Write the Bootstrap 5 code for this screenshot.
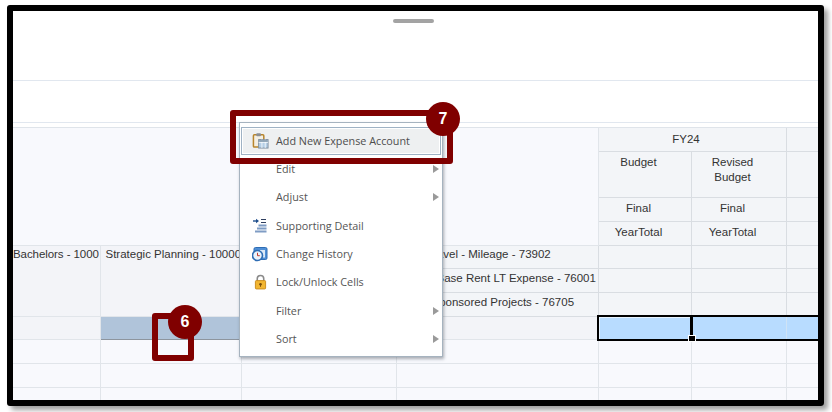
<!DOCTYPE html>
<html lang="en">
<head>
<meta charset="utf-8">
<title>Planning grid</title>
<link href="https://cdn.jsdelivr.net/npm/bootstrap@5.3.0/dist/css/bootstrap.min.css" rel="stylesheet">
<style>
html,body{margin:0;height:412px;overflow:hidden;background:#fff}
body{font-family:"Liberation Sans",Arial,sans-serif;font-size:12px;color:#333}
.shot-frame{margin:5px 0 0 7px;width:817px;height:401px;border:6px solid #000;border-radius:3px;box-shadow:4px 4px 5px rgba(0,0,0,.38)}
.shot-inner{position:relative;width:805px;height:389px;overflow:hidden;background:#fff}
.band-top{height:70px;border-bottom:1px solid #e1e7ef;padding:8px 0 0 380px}
.grab{width:41px;height:4px;border-radius:2px;background:#a3a3a3}
.band-mid{height:42px;border-bottom:1px solid #e1e7ef}
.band-thin{height:5px;border-bottom:1px solid #dfe4ea}
.pgrid{table-layout:fixed;width:806px;border-collapse:collapse;margin:0;background:#f8f9fd;color:#333;font-size:11.5px}
.pgrid td{padding:0 4px;border:1px solid #e1e5ea;height:23.7px;line-height:15px;vertical-align:middle;white-space:nowrap;overflow:hidden;background:#f8f9fd;box-shadow:none;color:#333}
.pgrid tr:first-child td{border-top:0}
.pgrid tr>td:first-child{border-left:0}
.pgrid tr>td:last-child{border-right:0}
.c1{width:87px}.c2{width:141px}.c3{width:155px}.c4{width:202px}.c5{width:93px}.c6{width:95px}.c7{width:33px}
.pgrid td.hd{background:#f3f5f8;text-align:center;border-color:#d9dde2;padding:0 12px 0 0}
.pgrid td.hd-low{padding-bottom:2px}
.pgrid td.hd-vert{vertical-align:top;padding-top:3px;white-space:normal;height:46px}
.pgrid td.corner{background:#f8f9fd}
.pgrid td.alt{background:#f3f4f8;vertical-align:top;padding-top:1px}
.pgrid td.endr{padding:1px 0 0 0;letter-spacing:-.07px}
.pgrid td.leftr{padding-left:5px;padding-right:0}
.pgrid td.sel-a{background:#b0c4da;border-left:1px solid #8d959e;border-bottom:1px solid #8d959e}
.pgrid td.sel-b{background:#b8dcff;border-top:2px solid #000;border-bottom:2px solid #000}
.pgrid td.sel-first{border-left:2px solid #000;border-right:3px solid #000;box-shadow:inset 1px 1px 0 #e6f3ff}
.pgrid td.sel-mid{border-right-color:#cfe3f5}
.pgrid td.acct{padding:0 0 4px 30px}
.pgrid td.acct-b{padding:0 0 4px 40px}
.pgrid td.acct-c{padding:0 0 4px 35px}
.fill-handle{position:absolute;left:676px;top:325px;width:6px;height:5px;background:#000;outline:1px solid #fff;z-index:1}
.ctx-menu{display:block;position:absolute;left:226px;top:111px;width:204px;height:235px;padding:3.7px 1px;margin:0;border:1px solid #a6b3bf;border-radius:0;background:#fff;box-shadow:1px 2px 3px rgba(70,80,90,.45);font-family:"Open Sans","Noto Sans",sans-serif;font-size:10.8px;z-index:2}
.ctx-menu .dropdown-item{display:flex;align-items:center;height:28.3px;padding:0 1px 0 9px;color:#555;font-size:10.8px;border:1px solid transparent;position:relative}
.ctx-menu .dropdown-item.picked{background:#eef0f1;border:1px solid #9fb2c4;box-shadow:inset 0 0 0 1px #fff;color:#4d4d4d}
.ic-slot{width:18px;height:18px;margin-right:7px;flex:none;display:flex;align-items:center;justify-content:center}
.ic-slot svg{display:block}
.sub-arrow{margin-left:auto;margin-right:0;width:0;height:0;border-left:6px solid #9a9a9a;border-top:4.5px solid transparent;border-bottom:4.5px solid transparent}
.callout-box{position:absolute;border:6px solid #800000;border-radius:3px;z-index:3}
.box-a{left:217px;top:99px;width:223px;height:54px}
.box-b{left:139px;top:302px;width:42px;height:48px}
.callout-dot{position:absolute;width:34px;height:34px;border-radius:50%;background:#800000;color:#fff;font-weight:700;font-size:16px;display:flex;align-items:center;justify-content:center;font-family:"Liberation Sans",Arial,sans-serif;z-index:4}
.dot-a{left:413px;top:91px}
.dot-b{left:155px;top:294px}
</style>
</head>
<body>
<div class="shot-frame">
<div class="shot-inner">
  <div class="band-top"><div class="grab"></div></div>
  <div class="band-mid"></div>
  <div class="band-thin"></div>
  <table class="pgrid">
    <colgroup><col class="c1"><col class="c2"><col class="c3"><col class="c4"><col class="c5"><col class="c6"><col class="c7"></colgroup>
    <tbody>
      <tr><td class="corner" colspan="4" rowspan="4"></td><td class="hd" colspan="2">FY24</td><td class="hd"></td></tr>
      <tr><td class="hd hd-vert">Budget</td><td class="hd hd-vert">Revised<br>Budget</td><td class="hd"></td></tr>
      <tr><td class="hd hd-low">Final</td><td class="hd hd-low">Final</td><td class="hd"></td></tr>
      <tr><td class="hd hd-low">YearTotal</td><td class="hd hd-low">YearTotal</td><td class="hd"></td></tr>
      <tr><td class="alt endr" rowspan="3">Bachelors - 1000</td><td class="alt leftr" rowspan="3">Strategic Planning - 10000</td><td class="alt" rowspan="3"></td><td class="hd text-start acct">Travel - Mileage - 73902</td><td class="hd"></td><td class="hd"></td><td class="hd"></td></tr>
      <tr><td class="hd text-start acct-b">Base Rent LT Expense - 76001</td><td class="hd"></td><td class="hd"></td><td class="hd"></td></tr>
      <tr><td class="hd text-start acct-c">Sponsored Projects - 76705</td><td class="hd"></td><td class="hd"></td><td class="hd"></td></tr>
      <tr><td class="alt"></td><td class="sel-a" colspan="2"></td><td class="alt"></td><td class="sel-b sel-first"></td><td class="sel-b sel-mid"></td><td class="sel-b"></td></tr>
      <tr><td></td><td></td><td></td><td></td><td></td><td></td><td></td></tr>
      <tr><td></td><td></td><td></td><td></td><td></td><td></td><td></td></tr>
      <tr><td></td><td></td><td></td><td></td><td></td><td></td><td></td></tr>
    </tbody>
  </table>
  <div class="fill-handle"></div>

  <div class="dropdown-menu show ctx-menu">
    <div class="dropdown-item picked"><span class="ic-slot"><svg width="17" height="17" viewBox="0 0 18 18"><rect x="1.5" y="3" width="11" height="13" rx="1" fill="#f4efe2" stroke="#b8862d" stroke-width="1.6"/><rect x="4.5" y="1.2" width="5" height="3.2" rx="1" fill="#8b8f94"/><rect x="7" y="8" width="10" height="9" fill="#b5cfe6" stroke="#7f8f9f"/><path d="M7 11h10M10.5 8v9M14 8v9" stroke="#fff" stroke-width=".8"/><rect x="7.5" y="8.5" width="9" height="2" fill="#8fa3b5"/></svg></span>Add New Expense Account</div>
    <div class="dropdown-item"><span class="ic-slot"></span>Edit<span class="sub-arrow"></span></div>
    <div class="dropdown-item"><span class="ic-slot"></span>Adjust<span class="sub-arrow"></span></div>
    <div class="dropdown-item"><span class="ic-slot"><svg width="16" height="16" viewBox="0 0 16 16"><path d="M1 3h4" stroke="#1f4e8c" stroke-width="1.4"/><path d="M4 .8 7 3 4 5.2z" fill="#1f4e8c"/><path d="M9 1.5h5M9 4.5h5" stroke="#2f3f5f" stroke-width="1.2"/><path d="M6.5 7.5h8M5 10.5h9.5M3 13.5h11.5" stroke="#7f9cc4" stroke-width="1.8"/></svg></span>Supporting Detail</div>
    <div class="dropdown-item"><span class="ic-slot"><svg width="16" height="16" viewBox="0 0 16 16"><rect x="2" y="1.5" width="13" height="12" rx="1.5" fill="#4f8fd6" stroke="#2e6db4"/><rect x="8" y="4" width="5" height="7.5" fill="#dbe9f7"/><circle cx="5.5" cy="9.5" r="5" fill="#e9f2fb" stroke="#2e6db4" stroke-width="1.6"/><path d="M5.5 6.8v2.9h2.3" fill="none" stroke="#c0392b" stroke-width="1"/></svg></span>Change History</div>
    <div class="dropdown-item"><span class="ic-slot"><svg width="13" height="16" viewBox="0 0 14 16"><path d="M3.5 7V4.5a3.5 3.5 0 0 1 7 0V7" fill="none" stroke="#8a8a8a" stroke-width="1.7"/><rect x="1.5" y="6.5" width="11" height="9" rx="1" fill="#f2b632" stroke="#c98a1c"/><circle cx="7" cy="10.5" r="1.4" fill="#7a4d0a"/><path d="M7 11v2.2" stroke="#7a4d0a" stroke-width="1"/></svg></span>Lock/Unlock Cells</div>
    <div class="dropdown-item"><span class="ic-slot"></span>Filter<span class="sub-arrow"></span></div>
    <div class="dropdown-item"><span class="ic-slot"></span>Sort<span class="sub-arrow"></span></div>
  </div>

  <div class="callout-box box-a"></div>
  <div class="callout-box box-b"></div>
  <div class="callout-dot dot-a">7</div>
  <div class="callout-dot dot-b">6</div>
</div>
</div>
</body>
</html>
